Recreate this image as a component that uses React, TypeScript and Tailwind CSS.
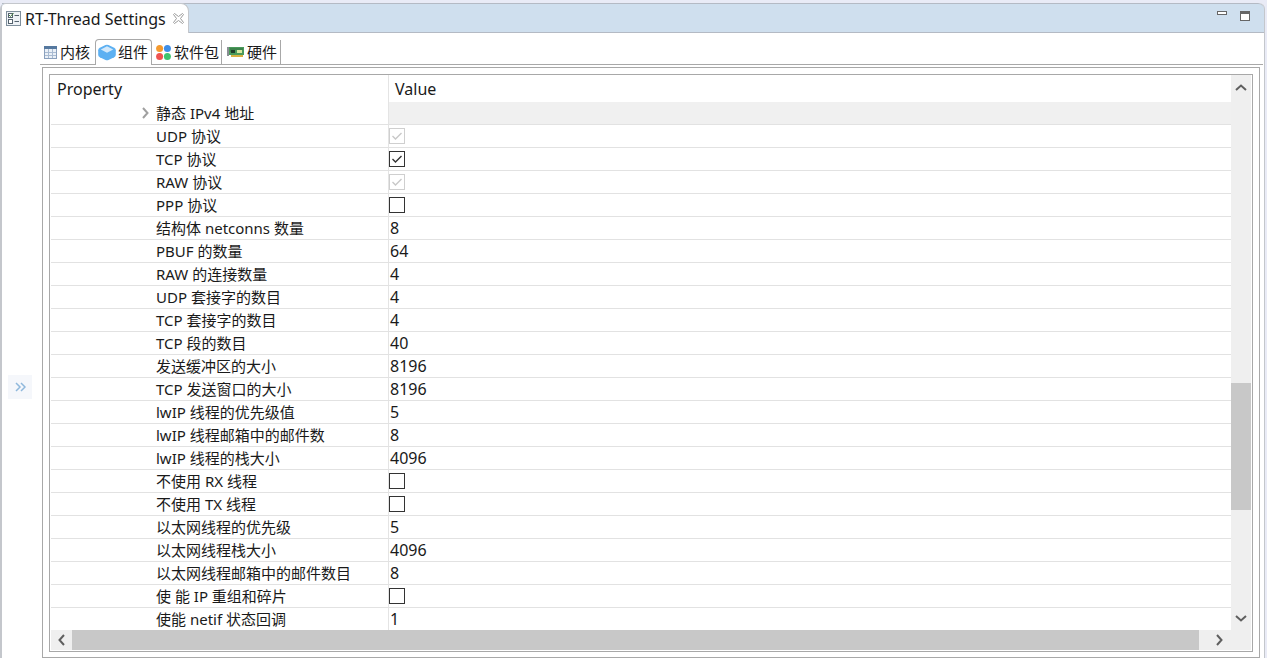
import React from 'react';

type Row = { label: string; value?: string; check?: 'on' | 'off' | 'disabled'; group?: boolean };

const rows: Row[] = [
  { label: '静态 IPv4 地址', group: true },
  { label: 'UDP 协议', check: 'disabled' },
  { label: 'TCP 协议', check: 'on' },
  { label: 'RAW 协议', check: 'disabled' },
  { label: 'PPP 协议', check: 'off' },
  { label: '结构体 netconns 数量', value: '8' },
  { label: 'PBUF 的数量', value: '64' },
  { label: 'RAW 的连接数量', value: '4' },
  { label: 'UDP 套接字的数目', value: '4' },
  { label: 'TCP 套接字的数目', value: '4' },
  { label: 'TCP 段的数目', value: '40' },
  { label: '发送缓冲区的大小', value: '8196' },
  { label: 'TCP 发送窗口的大小', value: '8196' },
  { label: 'lwIP 线程的优先级值', value: '5' },
  { label: 'lwIP 线程邮箱中的邮件数', value: '8' },
  { label: 'lwIP 线程的栈大小', value: '4096' },
  { label: '不使用 RX 线程', check: 'off' },
  { label: '不使用 TX 线程', check: 'off' },
  { label: '以太网线程的优先级', value: '5' },
  { label: '以太网线程栈大小', value: '4096' },
  { label: '以太网线程邮箱中的邮件数目', value: '8' },
  { label: '使 能 IP 重组和碎片', check: 'off' },
  { label: '使能 netif 状态回调', value: '1' },
];

const Chevron = ({ dir, color = '#5f5f5f' }: { dir: 'up' | 'down' | 'left' | 'right'; color?: string }) => {
  const d = {
    up: 'M1 7 L6 2.5 L11 7',
    down: 'M1 2 L6 6.5 L11 2',
    left: 'M7 1 L2.5 6 L7 11',
    right: 'M2 1 L6.5 6 L2 11',
  }[dir];
  const vertical = dir === 'up' || dir === 'down';
  return (
    <svg
      viewBox={vertical ? '0 0 12 9' : '0 0 9 12'}
      className={vertical ? 'w-[12px] h-[9px]' : 'w-[9px] h-[12px]'}
      fill="none"
      stroke={color}
      strokeWidth="2"
    >
      <path d={d} />
    </svg>
  );
};

const Checkbox = ({ state }: { state: 'on' | 'off' | 'disabled' }) => (
  <div
    className={`w-[16px] h-[16px] border flex items-center justify-center ${
      state === 'disabled' ? 'border-[#cfcfcf]' : 'border-[#333333]'
    }`}
  >
    {state !== 'off' && (
      <svg viewBox="0 0 14 14" className="w-[14px] h-[14px]" fill="none" strokeWidth="1.4" stroke={state === 'on' ? '#333333' : '#c8c8c8'}>
        <path d="M2.5 7 L5.5 10 L11.5 4" />
      </svg>
    )}
  </div>
);

const EditorIcon = () => (
  <svg viewBox="0 0 16 16" className="w-[16px] h-[16px]" fill="none">
    <rect x="0.5" y="0.5" width="14" height="14" fill="#eef2f6" stroke="#7f8f9c" />
    <rect x="2.5" y="2.5" width="4" height="4" fill="#fff" stroke="#55636f" />
    <path d="M3 4 L4.5 5.5 L7.5 2" stroke="#3c7a3c" />
    <rect x="2.5" y="8.5" width="4" height="4" fill="#fff" stroke="#55636f" />
    <path d="M8.5 4.5 H13 M8.5 10.5 H13" stroke="#55636f" />
  </svg>
);

const CloseIcon = () => (
  <svg viewBox="0 0 11 11" className="w-[11px] h-[11px]" fill="#ffffff" stroke="#9a9a9a">
    <path d="M1.5 0.5 L5.5 3.5 L9.5 0.5 L10.5 1.5 L7.5 5.5 L10.5 9.5 L9.5 10.5 L5.5 7.5 L1.5 10.5 L0.5 9.5 L3.5 5.5 L0.5 1.5 Z" />
  </svg>
);

const TableIcon = () => (
  <svg viewBox="0 0 13 13" className="w-[13px] h-[13px]" fill="none">
    <rect x="0.5" y="0.5" width="12" height="12" fill="#eaf0f7" stroke="#8aa0bd" />
    <rect x="0" y="0" width="13" height="3" fill="#55789f" />
    <path d="M4.5 3 V12 M8.5 3 V12 M1 6.5 H12 M1 9.5 H12" stroke="#a9bbd2" />
  </svg>
);

const CubeIcon = () => (
  <svg viewBox="0 0 18 17" className="w-[18px] h-[17px]">
    <path d="M7.5 1 Q9 0.3 10.5 1 L16.2 3.8 Q17.8 4.6 17.8 6.2 V10.8 Q17.8 12.4 16.2 13.2 L10.5 16 Q9 16.7 7.5 16 L1.8 13.2 Q0.2 12.4 0.2 10.8 V6.2 Q0.2 4.6 1.8 3.8 Z" fill="#5cb0f2" />
    <path d="M9 2.2 L15.2 5.4 L9 8.8 L2.8 5.4 Z" fill="#d3e9fb" />
  </svg>
);

const PackageIcon = () => (
  <svg viewBox="0 0 15 15" className="w-[15px] h-[15px]">
    <circle cx="3.6" cy="3.6" r="3.5" fill="#f59a2e" />
    <circle cx="11.4" cy="3.6" r="3.5" fill="#3f8fe8" />
    <circle cx="3.6" cy="11.4" r="3.5" fill="#ef5350" />
    <circle cx="11.4" cy="11.4" r="3.5" fill="#3fc46f" />
  </svg>
);

const BoardIcon = () => (
  <svg viewBox="0 0 17 12" className="w-[17px] h-[12px]">
    <rect x="0" y="1" width="2" height="9" fill="#8a8f94" />
    <rect x="2" y="1" width="15" height="8" fill="#4a9a5a" />
    <path d="M3 3 H16 M3 5 H8" stroke="#2f6f3f" />
    <rect x="4" y="4" width="4" height="3" fill="#1f3f2a" />
    <rect x="10" y="4" width="5" height="3" fill="#d8e8a0" />
    <rect x="4" y="9" width="12" height="2" fill="#d8b040" />
  </svg>
);

export default function App() {
  return (
    <div className="w-[1267px] h-[658px] overflow-hidden bg-[#e9ebf6] font-['Noto_Sans','Noto_Sans_CJK_SC',sans-serif] text-[15px] text-[#1a1a1a]">
      <div className="pt-[3px] pr-[2px] h-full">
        <div className="h-[655px] bg-white border-l-2 border-r border-[#c4c7cc] rounded-t-[6px] flex flex-col relative">
          {/* title bar */}
          <div className="h-[30px] shrink-0 bg-[#cfdfee] border-t border-b border-[#b4bac4] rounded-tr-[6px] flex justify-between">
            <div className="w-[187px] h-[30px] -mt-px bg-white border-t border-r border-[#c4c7cc] rounded-tr-[8px] rounded-tl-[4px] flex items-center pl-[4px] gap-[3px]">
              <EditorIcon />
              <span className="text-[16px] leading-none">RT-Thread Settings</span>
              <span className="ml-[4px]"><CloseIcon /></span>
            </div>
            <div className="flex items-start gap-[13px] pr-[14px] pt-[7px]">
              <div className="w-[10px] h-[4px] border border-[#666666] bg-white" />
              <div className="w-[10px] h-[10px] border border-[#666666] border-t-[3px] bg-white" />
            </div>
          </div>

          <div className="flex-1 flex min-h-0">
            {/* collapsed side rail */}
            <div className="w-[38px] shrink-0 pl-[6px] pt-[342px]">
              <div className="w-[24px] h-[24px] bg-[#f5f7fb] flex items-center justify-center">
                <svg viewBox="0 0 11 10" className="w-[11px] h-[10px]" fill="none" stroke="#8fb8dc" strokeWidth="1.5">
                  <path d="M1 1 L5 5 L1 9 M6 1 L10 5 L6 9" />
                </svg>
              </div>
            </div>

            <div className="flex-1 flex flex-col min-w-0">
              {/* tabs */}
              <div className="h-[31px] shrink-0 mt-[1px] border-b border-[#a8a8a8] flex items-end mr-[1px]">
                <div className="w-[55px] h-[24px] flex items-center pl-[4px] gap-[3px]">
                  <TableIcon />
                  <span>内核</span>
                </div>
                <div className="w-[57px] h-[26px] -mb-px relative bg-white border border-b-0 border-[#a8a8a8] rounded-t-[4px] flex items-center pl-[2px] gap-[2px]">
                  <CubeIcon />
                  <span>组件</span>
                </div>
                <div className="w-[70px] h-[24px] border-r border-[#a8a8a8] flex items-center pl-[4px] gap-[3px]">
                  <PackageIcon />
                  <span className="whitespace-nowrap">软件包</span>
                </div>
                <div className="w-[59px] h-[24px] border-r border-[#a8a8a8] flex items-center pl-[5px] gap-[3px]">
                  <BoardIcon />
                  <span>硬件</span>
                </div>
              </div>

              {/* tab body */}
              <div className="ml-[2px] mr-[4px] mt-[2px] h-[591px] border border-[#a8a8a8] px-[6px] pt-[6px]">
                <div className="h-[578px] border border-[#a8a8a8] flex flex-col px-px pb-px">
                  <div className="flex-1 flex min-h-0">
                    <div className="flex-1 min-w-0 flex flex-col overflow-hidden">
                      <div className="h-[27px] shrink-0 flex items-center text-[16px]">
                        <div className="w-[338px] pl-[6px] border-r border-[#e4e4e4] h-full flex items-center">Property</div>
                        <div className="pl-[6px]">Value</div>
                      </div>
                      {rows.map((r) => (
                        <div key={r.label} className="h-[23px] shrink-0 border-b border-[#e2e2e2] flex items-center">
                          <div className="w-[338px] h-full border-r border-[#e4e4e4] flex items-center pl-[105px] relative whitespace-nowrap">
                            {r.group && (
                              <span className="absolute left-[90px] top-[5px]"><Chevron dir="right" color="#a0a0a0" /></span>
                            )}
                            {r.label}
                          </div>
                          <div className={`flex-1 h-full flex items-center ${r.check ? '' : 'pl-px'} text-[16px] ${r.group ? 'bg-[#f0f0f0]' : ''}`}>
                            {r.check ? <Checkbox state={r.check} /> : r.value}
                          </div>
                        </div>
                      ))}
                    </div>
                    {/* vertical scrollbar */}
                    <div className="w-[20px] shrink-0 bg-[#efefef] flex flex-col items-center">
                      <div className="h-[24px] flex items-center"><Chevron dir="up" /></div>
                      <div className="h-[284px] shrink-0" />
                      <div className="h-[127px] shrink-0 w-full bg-[#c8c8c8]" />
                      <div className="flex-1" />
                      <div className="h-[24px] flex items-center"><Chevron dir="down" /></div>
                    </div>
                  </div>
                  {/* horizontal scrollbar */}
                  <div className="h-[20px] shrink-0 bg-[#efefef] flex items-center">
                    <div className="w-[21px] flex justify-center"><Chevron dir="left" /></div>
                    <div className="w-[1127px] h-full bg-[#c8c8c8]" />
                    <div className="w-[40px] flex justify-center"><Chevron dir="right" /></div>
                  </div>
                </div>
              </div>
            </div>
          </div>
        </div>
      </div>
    </div>
  );
}
